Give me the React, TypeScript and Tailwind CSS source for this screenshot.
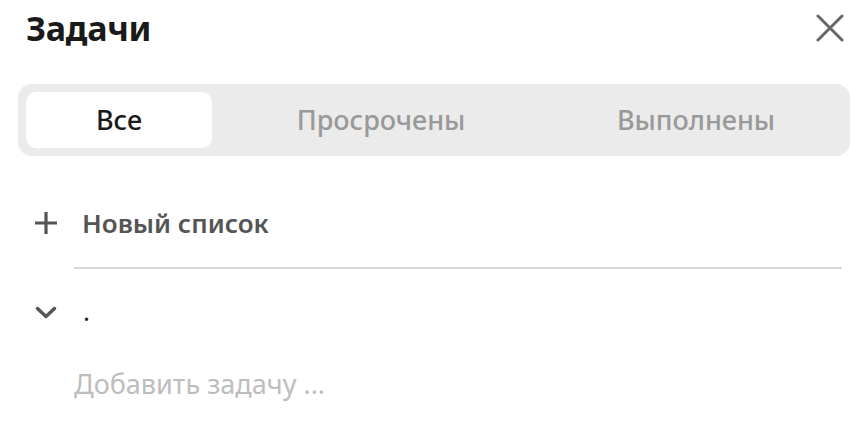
import React from 'react';

const App: React.FC = () => {
  return (
    <div className="w-[856px] h-[428px] bg-white overflow-hidden font-['Noto_Sans',sans-serif]">
      {/* Header */}
      <div className="flex items-center justify-between pl-[26px] pr-[11px] h-[56px]">
        <h1 className="text-[34px] font-bold text-[#1a1a1a] leading-none tracking-[-0.3px]">Задачи</h1>
        <button className="w-[30px] h-[30px] flex items-center justify-center">
          <svg width="28" height="28" viewBox="0 0 28 28" fill="none">
            <path d="M2 2L26 26M26 2L2 26" stroke="#666" strokeWidth="3" strokeLinecap="round" />
          </svg>
        </button>
      </div>

      {/* Tabs */}
      <div className="ml-[18px] mr-[6px] mt-[28px] h-[72px] rounded-[14px] bg-[#ebebeb] p-[8px] flex">
        <div className="w-[186px] rounded-[10px] bg-white flex items-center justify-center text-[27px] font-medium text-[#1a1a1a]">
          Все
        </div>
        <div className="w-[338px] flex items-center justify-center text-[27px] font-medium text-[#999]">
          Просрочены
        </div>
        <div className="flex-1 flex items-center justify-center text-[27px] font-medium text-[#999]">
          Выполнены
        </div>
      </div>

      {/* New list */}
      <div className="flex items-center h-[64px] mt-[35px] pl-[34px]">
        <svg width="24" height="24" viewBox="0 0 24 24" fill="none">
          <path d="M12 1V23M1 12H23" stroke="#555" strokeWidth="3.2" />
        </svg>
        <span className="ml-[24px] text-[26px] font-semibold text-[#555] leading-none">Новый список</span>
      </div>
      <div className="ml-[74px] mr-[14px] h-[2px] bg-[#d9d9d9] mt-[12px]" />

      {/* List */}
      <div className="flex items-center h-[56px] mt-[16px] pl-[35px]">
        <svg width="22" height="14" viewBox="0 0 22 14" fill="none">
          <path d="M2.5 2.5L11 10.5L19.5 2.5" stroke="#555" strokeWidth="3.5" strokeLinecap="round" strokeLinejoin="round" />
        </svg>
        <span className="ml-[26px] text-[26px] text-[#1a1a1a] leading-none -mt-[4px]">.</span>
      </div>
      <div className="pl-[74px] mt-[25px] text-[27px] leading-[36px] text-[#bdbdbd]">Добавить задачу ...</div>
    </div>
  );
};

export default App;
